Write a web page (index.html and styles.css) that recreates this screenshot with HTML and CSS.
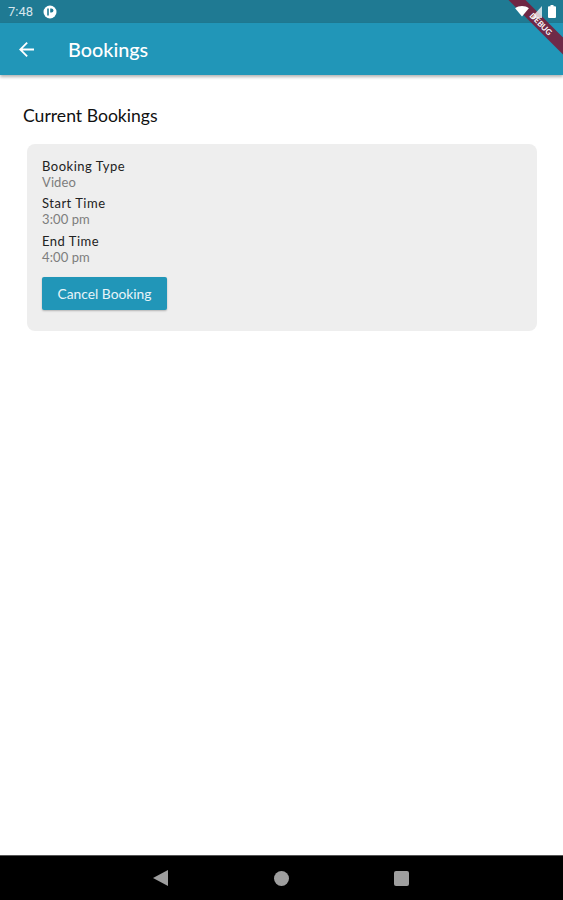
FILE: index.html
```html
<!DOCTYPE html>
<html lang="en">
<head>
    <meta charset="UTF-8">
    <meta name="viewport" content="width=device-width, initial-scale=1.0">
    <title>Bookings</title>
    <link rel="stylesheet" href="styles.css">
</head>
<body>
    <div class="screen">
        <div class="status-bar">
            <div class="status-left">
                <span class="clock">7:48</span>
                <svg class="status-app" width="14" height="14" viewBox="0 0 14 14">
                    <circle cx="7" cy="7" r="6.5" fill="#fff"/>
                    <path d="M5 3.5v7" stroke="#1f7a93" stroke-width="1.6" fill="none"/>
                    <path d="M7.2 3.5h1.2a2 2 0 0 1 0 4H7.2z" fill="#1f7a93"/>
                </svg>
            </div>
            <div class="status-right">
                <svg class="wifi" width="14" height="11" viewBox="0 0 15 12"><path d="M0 2.5C4 -.8 11 -.8 15 2.5L7.500 11.500z" fill="#fff"/></svg>
                <svg class="signal" width="11" height="12" viewBox="0 0 11 12"><path d="M0 12 11 0v12z" fill="#fff" fill-opacity="0.75"/></svg>
                <svg class="battery" width="8" height="13" viewBox="0 0 8 13"><path d="M2.500 0h3v1.200H7a1 1 0 0 1 1 1V12a1 1 0 0 1-1 1H1a1 1 0 0 1-1-1V2.200a1 1 0 0 1 1-1h1.500z" fill="#fff"/></svg>
            </div>
        </div>

        <header class="app-bar">
            <svg class="back-icon" width="15" height="15" viewBox="0 0 16 16">
                <path d="M16 7H3.800l5.600-5.600L8 0 0 8l8 8 1.400-1.400L3.800 9H16z" fill="#fff"/>
            </svg>
            <h1>Bookings</h1>
        </header>

        <main class="content">
            <h2>Current Bookings</h2>
            <div class="booking-card">
                <div class="field">
                    <p class="field-label">Booking Type</p>
                    <p class="field-value">Video</p>
                </div>
                <div class="field">
                    <p class="field-label">Start Time</p>
                    <p class="field-value">3:00 pm</p>
                </div>
                <div class="field">
                    <p class="field-label">End Time</p>
                    <p class="field-value">4:00 pm</p>
                </div>
                <button class="cancel-btn">Cancel Booking</button>
            </div>
        </main>

        <footer class="nav-bar">
            <svg width="15" height="16" viewBox="0 0 15 16"><path d="M15 0v16L0 8z" fill="#9e9e9e"/></svg>
            <svg width="15" height="15" viewBox="0 0 14 14"><circle cx="7" cy="7" r="7" fill="#9e9e9e"/></svg>
            <svg width="15" height="15" viewBox="0 0 15 15"><rect width="15" height="15" rx="2" fill="#9e9e9e"/></svg>
        </footer>

        <div class="debug-ribbon">DEBUG</div>
    </div>
</body>
</html>
```

FILE: styles.css
```css
* {
    box-sizing: border-box;
}
body {
    margin: 0;
    font-family: 'Lato', sans-serif;
    background: #fff;
}
.screen {
    position: relative;
    display: flex;
    flex-direction: column;
    height: 900px;
    overflow: hidden;
}
.status-bar {
    height: 23px;
    background-color: #1f7a93;
    display: flex;
    justify-content: space-between;
    align-items: center;
    padding: 0 7px 0 8px;
    color: #d5e6ec;
}
.status-left {
    display: flex;
    align-items: center;
    gap: 10px;
}
.clock {
    font-family: 'Roboto', sans-serif;
    font-size: 13px;
}
.status-right {
    position: relative;
    z-index: 2;
    display: flex;
    align-items: center;
    gap: 2px;
}
.battery {
    margin-left: 4px;
}
.app-bar {
    height: 52px;
    background-color: #2196b8;
    display: flex;
    align-items: center;
    padding-left: 19px;
    gap: 34px;
    box-shadow: 0 2px 3px rgba(0, 0, 0, 0.3);
}
.app-bar h1 {
    margin: 0;
    color: #fff;
    font-size: 19.8px;
    font-weight: 500;
}
.content {
    flex: 1;
    padding: 31px 26px 0 27px;
}
.content h2 {
    margin: 0 0 18px -4px;
    font-size: 17.6px;
    line-height: 20px;
    font-weight: 400;
    color: #111;
}
.booking-card {
    background-color: #eee;
    border-radius: 8px;
    height: 187px;
    padding: 15px;
}
.field {
    margin-bottom: 6px;
}
.field-label {
    margin: 0;
    font-size: 13px;
    line-height: 15.7px;
    letter-spacing: 0.5px;
    color: #222;
}
.field-value {
    margin: 0;
    font-size: 13px;
    line-height: 15.7px;
    letter-spacing: 0.1px;
    color: #7d7d7d;
}
.cancel-btn {
    display: block;
    margin-top: 12px;
    width: 125px;
    height: 33px;
    padding: 0;
    background-color: #2196b8;
    border: none;
    border-radius: 2px;
    color: #e8f4f8;
    font-family: inherit;
    font-size: 13.8px;
    box-shadow: 0 1px 2px rgba(0, 0, 0, 0.25);
}
.nav-bar {
    height: 45px;
    background-color: #000;
    border-top: 1px solid #555;
    display: flex;
    align-items: center;
    gap: 105.5px;
    padding-left: 153px;
}
.debug-ribbon {
    position: absolute;
    z-index: 1;
    top: 18px;
    right: -28px;
    width: 100px;
    height: 12px;
    transform: rotate(45deg);
    background-color: rgba(120, 30, 60, 0.9);
    color: #fff;
    font-size: 8px;
    line-height: 12px;
    font-weight: 700;
    text-align: center;
}
```
